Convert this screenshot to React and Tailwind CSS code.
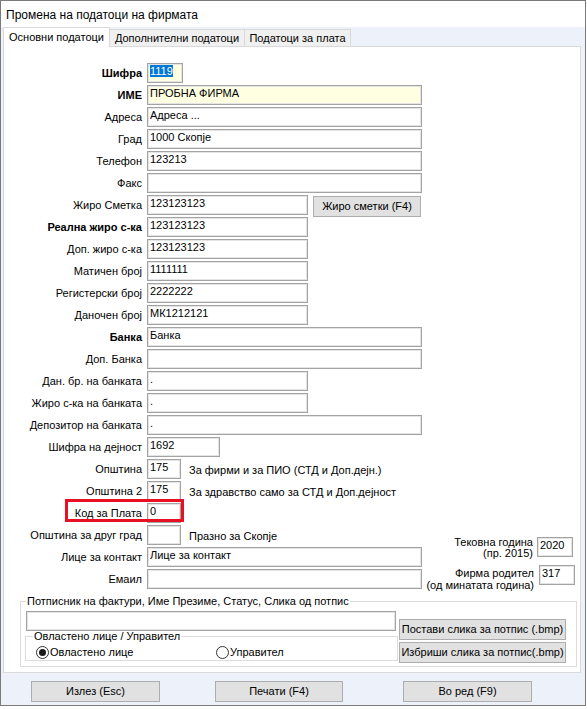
import React from "react";

// rows of the main tab, top to bottom (22px pitch)
const rows = [
  { label: "Шифра", bold: true, value: "1119", w: "w-[36px]", yellow: true, selected: true },
  { label: "ИМЕ", bold: true, value: "ПРОБНА ФИРМА", w: "w-[275px]", yellow: true },
  { label: "Адреса", value: "Адреса ...", w: "w-[275px]" },
  { label: "Град", value: "1000 Скопје", w: "w-[275px]" },
  { label: "Телефон", value: "123213", w: "w-[275px]" },
  { label: "Факс", value: "", w: "w-[275px]" },
  { label: "Жиро Сметка", value: "123123123", w: "w-[161px]", button: "Жиро сметки (F4)" },
  { label: "Реална жиро с-ка", bold: true, value: "123123123", w: "w-[161px]" },
  { label: "Доп. жиро с-ка", value: "123123123", w: "w-[161px]" },
  { label: "Матичен број", value: "1111111", w: "w-[161px]" },
  { label: "Регистерски број", value: "2222222", w: "w-[161px]" },
  { label: "Даночен број", value: "МК1212121", w: "w-[161px]" },
  { label: "Банка", bold: true, value: "Банка", w: "w-[275px]" },
  { label: "Доп. Банка", value: "", w: "w-[275px]" },
  { label: "Дан. бр. на банката", value: ".", w: "w-[161px]" },
  { label: "Жиро с-ка на банката", value: ".", w: "w-[161px]" },
  { label: "Депозитор на банката", value: ".", w: "w-[275px]" },
  { label: "Шифра на дејност", value: "1692", w: "w-[73px]" },
  { label: "Општина", value: "175", w: "w-[34px]", note: "За фирми и за ПИО (СТД и Доп.дејн.)" },
  { label: "Општина 2", value: "175", w: "w-[34px]", note: "За здравство само за СТД и Доп.дејност" },
  { label: "Код за Плата", value: "0", w: "w-[34px]", marked: true },
];

const lowerRows = [
  { label: "Општина за друг град", value: "", w: "w-[34px]", note: "Празно за Скопје" },
  { label: "Лице за контакт", value: "Лице за контакт", w: "w-[275px]" },
  { label: "Емаил", value: "", w: "w-[275px]" },
];

function Field({ w, value, yellow, selected }) {
  return (
    <div
      className={`${w} h-[20px] shrink-0 overflow-hidden whitespace-nowrap border border-[#a3a3a3] pl-[2px] leading-[14px] shadow-[inset_0_0_0_1px_#e4e4e4] ${
        yellow ? "bg-[#ffffe1]" : "bg-white"
      }`}
    >
      {selected ? <span className="bg-[#0078d7] text-white">{value}</span> : value}
    </div>
  );
}

function WinButton({ children, className = "" }) {
  return (
    <button
      type="button"
      className={`flex shrink-0 items-center justify-center whitespace-nowrap border border-[#adadad] bg-[#e1e1e1] text-[11px] text-black ${className}`}
    >
      {children}
    </button>
  );
}

function Row({ row }) {
  return (
    <div className="relative flex h-[20px] items-start">
      <div
        className={`w-[138px] shrink-0 whitespace-nowrap text-right leading-[20px] ${
          row.bold ? "font-bold" : ""
        }`}
      >
        {row.label}
      </div>
      <div className="ml-[5px] flex items-start">
        <Field {...row} />
        {row.button && (
          <WinButton className="ml-[5px] mt-[1px] h-[21px] w-[108px]">{row.button}</WinButton>
        )}
        {row.note && <div className="ml-[8px] whitespace-nowrap pt-[1px] leading-[20px]">{row.note}</div>}
      </div>
      {/* red annotation box over Код за Плата */}
      {row.marked && (
        <div className="pointer-events-none absolute left-[61px] top-[-4px] h-[23px] w-[119px] border-[3px] border-[#e81123]" />
      )}
    </div>
  );
}

function Radio({ checked, label, className = "" }) {
  return (
    <div className={`flex items-center ${className}`}>
      <span className="flex h-[13px] w-[13px] shrink-0 items-center justify-center rounded-full border border-[#333333] bg-white">
        {checked && <span className="h-[7px] w-[7px] rounded-full bg-[#1a1a1a]" />}
      </span>
      <span className="ml-[1px] leading-[14px]">{label}</span>
    </div>
  );
}

export default function App() {
  return (
    <div className="h-[709px] w-[587px] bg-white font-['Liberation_Sans',Arial,sans-serif] text-[11px] text-black">
      <div className="flex h-[706px] w-[586px] flex-col border border-[#7a7a7a] bg-[#edf2fa]">
        {/* title bar */}
        <div className="h-[26px] shrink-0 bg-white pl-[5px] text-[12px] leading-[28px]">
          Промена на податоци на фирмата
        </div>

        {/* tabs */}
        <div className="flex h-[19px] shrink-0 items-end pl-[2px]">
          <div className="relative z-10 mb-[-1px] flex h-[20px] w-[107px] items-center justify-center border border-b-0 border-[#d9d9d9] bg-white pb-[1px]">
            Основни податоци
          </div>
          <div className="flex h-[17px] w-[135px] items-center justify-center border-r border-t border-[#d9d9d9] bg-[#f0f0f0]">
            Дополнителни податоци
          </div>
          <div className="flex h-[17px] w-[106px] items-center justify-center border-r border-t border-[#d9d9d9] bg-[#f0f0f0]">
            Податоци за плата
          </div>
        </div>

        {/* tab page */}
        <div className="ml-[2px] flex h-[627px] w-[578px] shrink-0 flex-col border border-[#d9d9d9] bg-white pt-[16px]">
          <div className="flex flex-col gap-[2px]">
            {rows.map((r) => (
              <Row key={r.label} row={r} />
            ))}
          </div>

          <div className="mt-[2px] flex">
            <div className="flex flex-col gap-[2px]">
              {lowerRows.map((r) => (
                <Row key={r.label} row={r} />
              ))}
            </div>
            <div className="ml-auto flex flex-col items-end">
              <div className="mr-[7px] mt-[12px] flex items-start">
                <div className="whitespace-nowrap text-right leading-[11px]">
                  Тековна година
                  <br />
                  (пр. 2015)
                </div>
                <div className="ml-[4px]">
                  <Field w="w-[36px]" value="2020" />
                </div>
              </div>
              <div className="mr-[5px] mt-[6px] flex items-start">
                <div className="whitespace-nowrap pt-[2px] text-right leading-[12px]">
                  Фирма родител
                  <br />
                  (од минатата година)
                </div>
                <div className="ml-[5px]">
                  <Field w="w-[36px]" value="317" />
                </div>
              </div>
            </div>
          </div>

          {/* signature group */}
          <fieldset className="ml-[16px] mt-[5px] w-[557px] border border-[#dcdcdc] pb-[3px]">
            <legend className="ml-[5px] px-[1px] leading-[11px]">
              Потписник на фактури, Име Презиме, Статус, Слика од потпис
            </legend>
            <div className="flex items-start">
              <div className="flex w-[377px] shrink-0 flex-col">
                <div className="ml-[5px] mt-[4px] h-[20px] w-[370px] border border-[#a3a3a3] bg-white shadow-[inset_0_0_0_1px_#e4e4e4]" />
                <fieldset className="ml-[4px] w-[373px] border border-[#dcdcdc] pb-[1px]">
                  <legend className="ml-[7px] px-[1px] leading-[11px]">Овластено лице / Управител</legend>
                  <div className="mt-[3px] flex h-[14px] items-center pl-[10px]">
                    <Radio checked label="Овластено лице" className="w-[180px]" />
                    <Radio label="Управител" />
                  </div>
                </fieldset>
              </div>
              <div className="ml-[1px] mt-[12px] flex flex-col gap-[2px]">
                <WinButton className="h-[21px] w-[167px]">Постави слика за потпис (.bmp)</WinButton>
                <WinButton className="h-[21px] w-[167px]">Избриши слика за потпис(.bmp)</WinButton>
              </div>
            </div>
          </fieldset>
        </div>

        {/* bottom buttons */}
        <div className="mt-[8px] flex pl-[30px]">
          <WinButton className="h-[21px] w-[129px]">Излез (Esc)</WinButton>
          <WinButton className="ml-[55px] h-[21px] w-[128px]">Печати (F4)</WinButton>
          <WinButton className="ml-[60px] h-[21px] w-[129px]">Во ред (F9)</WinButton>
        </div>
      </div>
    </div>
  );
}
